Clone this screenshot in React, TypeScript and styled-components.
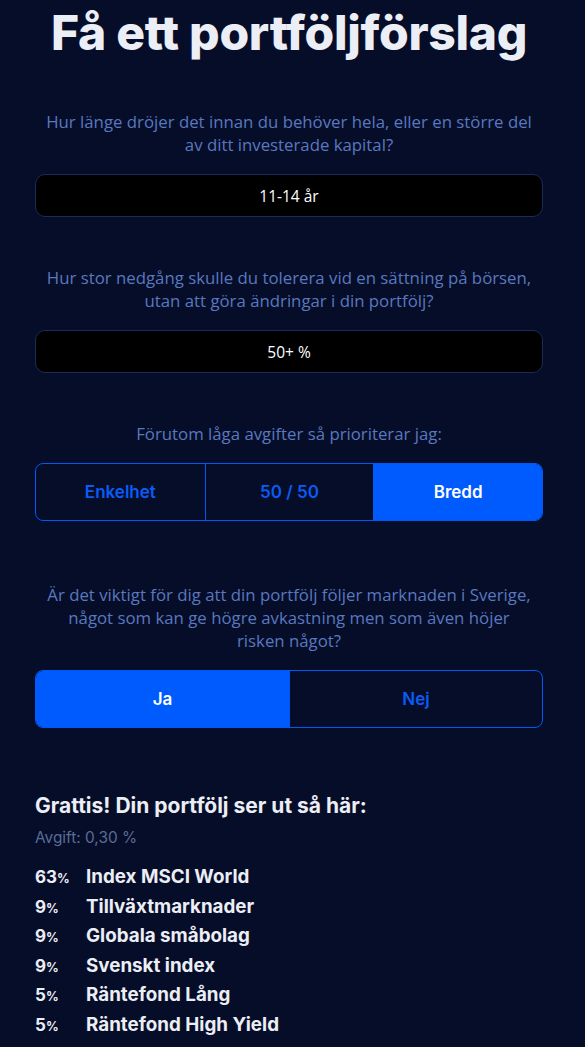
import * as React from "react";
import styled, { createGlobalStyle } from "styled-components";

const GlobalStyle = createGlobalStyle`
  html, body {
    margin: 0;
    padding: 0;
    background: #060d29;
  }
  body {
    font-family: "Open Sans", "Noto Sans", sans-serif;
  }
`;

interface Holding {
  share: number;
  name: string;
}

const holdings: Holding[] = [
  { share: 63, name: "Index MSCI World" },
  { share: 9, name: "Tillväxtmarknader" },
  { share: 9, name: "Globala småbolag" },
  { share: 9, name: "Svenskt index" },
  { share: 5, name: "Räntefond Lång" },
  { share: 5, name: "Räntefond High Yield" }
];

export default function App() {
  return (
    <Page>
      <GlobalStyle />
      <Title>Få ett portföljförslag</Title>

      <Question $top={46}>
        Hur länge dröjer det innan du behöver hela, eller en större del
        <br />
        av ditt investerade kapital?
      </Question>
      <ValueBox>11-14 år</ValueBox>

      <Question $top={49}>
        Hur stor nedgång skulle du tolerera vid en sättning på börsen,
        <br />
        utan att göra ändringar i din portfölj?
      </Question>
      <ValueBox>50+ %</ValueBox>

      <Question $top={49}>Förutom låga avgifter så prioriterar jag:</Question>
      <Segmented count={3}>
        <Segment>Enkelhet</Segment>
        <Segment>50 / 50</Segment>
        <Segment active>Bredd</Segment>
      </Segmented>

      <Question $top={62}>
        Är det viktigt för dig att din portfölj följer marknaden i Sverige,
        <br />
        något som kan ge högre avkastning men som även höjer
        <br />
        risken något?
      </Question>
      <Segmented count={2}>
        <Segment active>Ja</Segment>
        <Segment>Nej</Segment>
      </Segmented>

      <Result>
        <ResultTitle>Grattis! Din portfölj ser ut så här:</ResultTitle>
        <Fee>Avgift: 0,30 %</Fee>
        <HoldingList>
          {holdings.map((h, i) => (
            <HoldingRow key={i}>
              <Share>
                {h.share}
                <Percent>%</Percent>
              </Share>
              <HoldingName>{h.name}</HoldingName>
            </HoldingRow>
          ))}
        </HoldingList>
      </Result>
    </Page>
  );
}

const Page = styled.div`
  width: 585px;
  min-height: 1047px;
  box-sizing: border-box;
  padding: 0 42px 0 35px;
  background: #060d29;
  display: flex;
  flex-direction: column;
`;

const Title = styled.h1`
  margin: 2px 0 0 0;
  font-family: Inter, "Noto Sans", sans-serif;
  font-weight: 800;
  font-size: 48px;
  line-height: 62px;
  letter-spacing: -0.3px;
  color: #eceef5;
  text-align: center;
`;

const Question = styled.p<{ $top: number }>`
  margin: ${p => p.$top}px 0 18px 0;
  font-size: 16.8px;
  line-height: 23px;
  color: #5a78bf;
  text-align: center;
`;

const ValueBox = styled.div`
  height: 43px;
  box-sizing: border-box;
  border: 1px solid #1c2a57;
  border-radius: 10px;
  background: #000000;
  color: #ffffff;
  font-size: 15.5px;
  display: flex;
  align-items: center;
  justify-content: center;
`;

const Segmented = styled.div<{ count: number }>`
  display: grid;
  grid-template-columns: repeat(${p => p.count}, 1fr);
  height: 58px;
  box-sizing: border-box;
  border: 1px solid #0058f5;
  border-radius: 8px;
  overflow: hidden;
`;

const Segment = styled.div<{ active?: boolean }>`
  display: flex;
  align-items: center;
  justify-content: center;
  font-family: Inter, "Noto Sans", sans-serif;
  font-weight: 600;
  font-size: 17px;
  color: ${p => (p.active ? "#ffffff" : "#0a5cf5")};
  background: ${p => (p.active ? "#005bff" : "transparent")};
  & + & {
    border-left: 1px solid #0058f5;
  }
`;

const Result = styled.section`
  margin-top: 63px;
  display: flex;
  flex-direction: column;
`;

const ResultTitle = styled.h2`
  margin: 0;
  font-family: Inter, "Noto Sans", sans-serif;
  font-weight: 700;
  font-size: 21px;
  line-height: 30px;
  color: #eceef5;
`;

const Fee = styled.div`
  margin-top: 6px;
  font-family: Inter, "Noto Sans", sans-serif;
  font-size: 15.4px;
  line-height: 22px;
  color: #5a6c96;
`;

const HoldingList = styled.div`
  margin-top: 16px;
  display: flex;
  flex-direction: column;
`;

const HoldingRow = styled.div`
  display: flex;
  align-items: baseline;
  height: 29.6px;
  font-family: Inter, "Noto Sans", sans-serif;
  font-weight: 700;
  color: #eceef5;
`;

const Share = styled.span`
  width: 51px;
  font-size: 17px;
`;

const Percent = styled.span`
  font-size: 12.5px;
`;

const HoldingName = styled.span`
  font-size: 18.8px;
`;
